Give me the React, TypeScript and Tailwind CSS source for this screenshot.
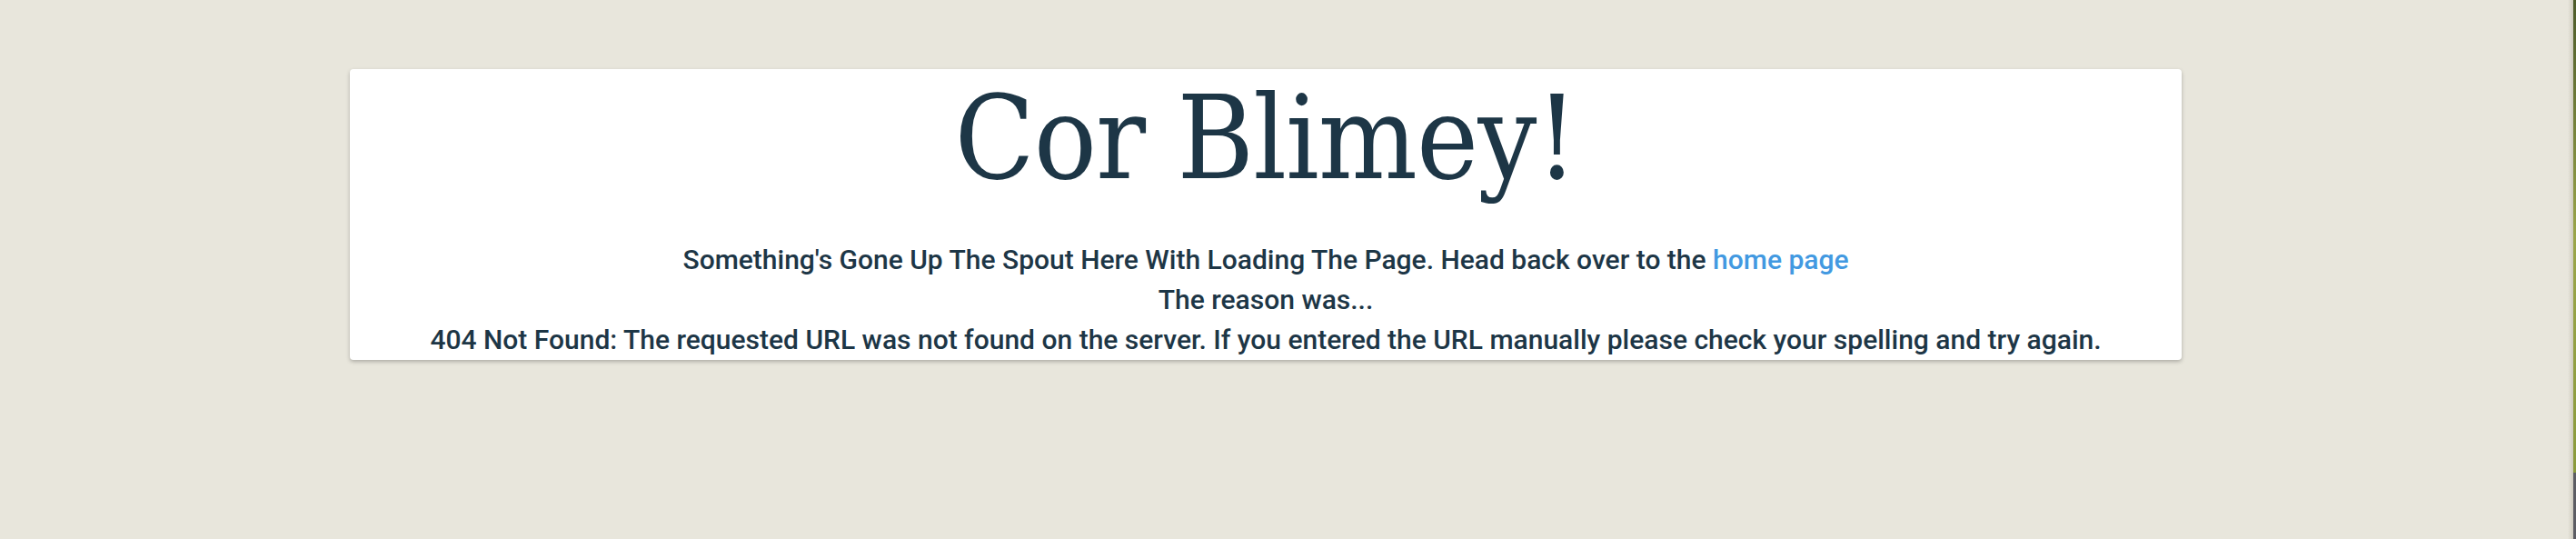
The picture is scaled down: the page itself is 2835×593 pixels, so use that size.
import React from 'react'

const App = () => {
  return (
    <div className="flex h-[593px] w-full bg-[#e8e6dc]">
      <main className="flex-1 pt-[76px]">
        <div className="ml-[385px] w-[2016px] rounded bg-white pt-[12px] text-center text-[#1d3646] shadow-[0_2px_4px_rgba(0,0,0,0.25)]">
          <h1 className="font-['DejaVu_Serif_Condensed','Roboto_Slab',serif] text-[128px] leading-none tracking-[-1px]">
            Cor Blimey!
          </h1>
          <div className="mt-[48px] font-['Roboto',sans-serif] text-[30px] leading-[44px] font-medium">
            <p>
              Something's Gone Up The Spout Here With Loading The Page. Head back over to the{' '}
              <a href="/" className="text-[#4299e1]">
                home page
              </a>
            </p>
            <p>The reason was...</p>
            <p>
              404 Not Found: The requested URL was not found on the server. If you entered the URL manually please check your spelling and try again.
            </p>
          </div>
        </div>
      </main>
      <div className="w-[6px] bg-gradient-to-r from-[#e8e6dc] to-[#cfcbbf]" />
      <div className="flex w-[3px] flex-col">
        <div className="h-[520px] bg-gradient-to-b from-[#4c5a2a] via-[#9aa54a] to-[#8a9a3c]" />
        <div className="flex-1 bg-[#5b5c63]" />
      </div>
    </div>
  )
}

export default App
